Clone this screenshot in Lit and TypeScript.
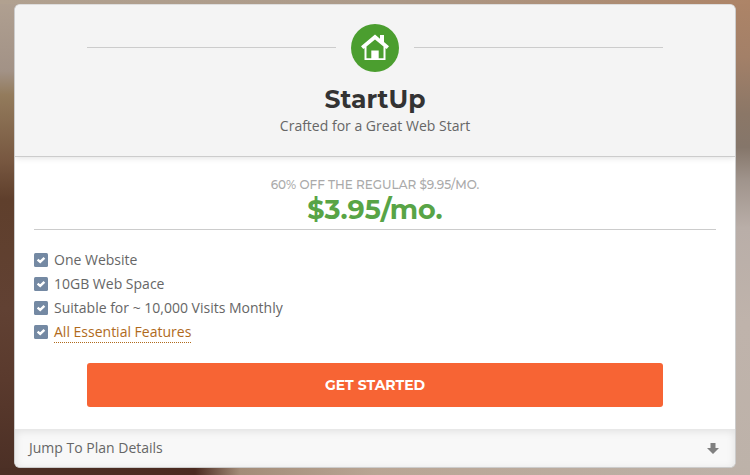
import { LitElement, html, css } from "lit";
import { customElement } from "lit/decorators.js";

const features = ["One Website", "10GB Web Space", "Suitable for ~ 10,000 Visits Monthly"];

@customElement("plan-check")
class PlanCheck extends LitElement {
  static styles = css`
    :host { display: block; width: 14px; height: 14px; }
    .mark { display: block; width: 14px; height: 14px; }
  `;
  render() {
    return html`<svg class="mark" viewBox="0 0 14 14" aria-hidden="true">
      <rect width="14" height="14" rx="1.5" fill="#7489a3" />
      <path d="M3.6 6.6 6.2 8.9 10.4 4.8" fill="none" stroke="#fff" stroke-width="2.4" />
    </svg>`;
  }
}

@customElement("app-root")
class AppRoot extends LitElement {
  static styles = css`
    * { box-sizing: border-box; }
    :host {
      display: block;
      min-height: 100vh;
      box-sizing: border-box;
      padding: 4px 14px 7px;
      color: #666;
      font: 14px/24px "Open Sans", sans-serif;
      background:
        linear-gradient(to right, #b1a190, #ac9a89 50%, #ad8467) top / 100% 4px no-repeat,
        linear-gradient(to right, #4b2f25, #4b2a20 26%, #a38c78 32%, #b9a594 50%, #bdb2a9) bottom / 100% 7px no-repeat,
        linear-gradient(#b0a091, #a29286 15%, #937b5c 20%, #775740 34%, #5f3f2c 42%, #614133 65%, #5a3a2d 80%, #4b2f25) left / 50% 100% no-repeat,
        linear-gradient(#ad8467, #a38068 12%, #8b7767 24%, #85766a 31%, #a0948c 38%, #b9aea8 48%, #bfb3ab 68%, #bdb2a9) right / 50% 100% no-repeat;
    }
    .card {
      border: 1px solid #ccc;
      border-top-color: #ddd;
      border-radius: 6px;
      background: #fff;
      overflow: hidden;
    }
    .head {
      padding: 19px 72px 18px;
      background: #f4f4f4;
      border-bottom: 1px solid #ccc;
      box-shadow: 0 1px 6px rgba(0, 0, 0, 0.12);
      text-align: center;
    }
    .emblem { display: flex; align-items: center; gap: 15px; }
    .emblem::before, .emblem::after {
      content: "";
      flex: 1;
      height: 2px;
      border-top: 1px solid #ccc;
    }
    .house { display: block; width: 48px; height: 48px; }
    h2 {
      margin: 12px 0 0;
      color: #333;
      font: 700 25px/30px Montserrat, "Open Sans", sans-serif;
    }
    .tagline { margin: 0; }
    .body { padding: 20px 19px 22px; }
    .price {
      padding-bottom: 2px;
      border-bottom: 1px solid #ccc;
      text-align: center;
      font-family: Montserrat, "Open Sans", sans-serif;
    }
    .regular { margin: 0; color: #aaa; font-size: 12px; line-height: 16px; font-weight: 500; }
    .now { margin: 0; color: #58a446; font-size: 27px; line-height: 34px; font-weight: 700; }
    .features { margin: 18px 0 19px; padding: 0; list-style: none; }
    .features li { display: flex; align-items: center; gap: 6px; height: 24px; }
    .more { color: #b06a1c; text-decoration: none; line-height: 21px; border-bottom: 1px dotted #b06a1c; }
    .start {
      display: block;
      width: calc(100% - 106px);
      height: 44px;
      margin: 0 auto;
      padding: 0;
      border: 0;
      border-radius: 3px;
      background: #f76434;
      color: #fff;
      font: 700 14px/24px Montserrat, "Open Sans", sans-serif;
    }
    .jump {
      display: flex;
      align-items: center;
      justify-content: space-between;
      height: 38px;
      padding: 0 16px 0 14px;
      background: #f8f8f8;
      box-shadow: inset 0 2px 8px rgba(0, 0, 0, 0.1);
      color: #666;
      text-decoration: none;
    }
    .arrow { display: block; width: 12px; height: 11px; }
  `;
  render() {
    return html`<main class="card">
      <header class="head">
        <div class="emblem">
          <svg class="house" viewBox="0 0 48 48" aria-hidden="true">
            <circle cx="24" cy="24" r="24" fill="#4b9e2f" />
            <path fill="#fff" fill-rule="evenodd" d="M24 10.5 29 14.7V11h4v7l5 4.2-2.3 2.8-1.2-1V36h-21V24l-1.2 1L10 22.2ZM24 15.5 15.5 22.6V34.3h4.8V26.5h7.4v7.8h4.8V22.6Z" />
          </svg>
        </div>
        <h2>StartUp</h2>
        <p class="tagline">Crafted for a Great Web Start</p>
      </header>
      <section class="body">
        <div class="price">
          <p class="regular">60% OFF THE REGULAR $9.95/MO.</p>
          <p class="now">$3.95/mo.</p>
        </div>
        <ul class="features">
          ${features.map((f) => html`<li><plan-check></plan-check><span>${f}</span></li>`)}
          <li><plan-check></plan-check><a class="more" href="#features">All Essential Features</a></li>
        </ul>
        <button class="start" type="button">GET STARTED</button>
      </section>
      <a class="jump" href="#details">Jump To Plan Details
        <svg class="arrow" viewBox="0 0 12 11" aria-hidden="true"><path d="M3.5 0h5v5H12L6 11 0 5h3.5Z" fill="#808080" /></svg>
      </a>
    </main>`;
  }
}
